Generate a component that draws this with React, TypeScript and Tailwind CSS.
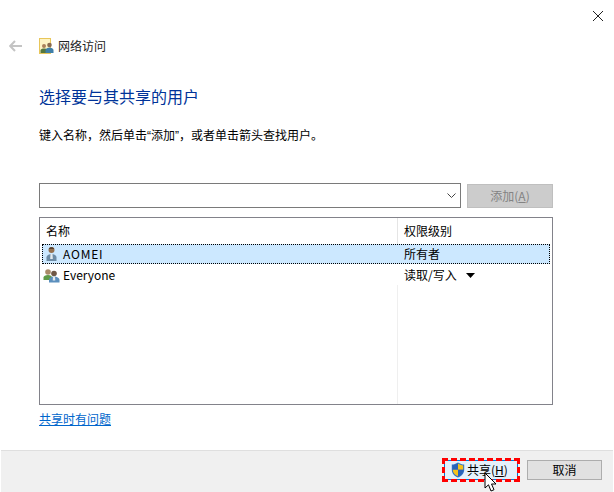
const font = "[font-family:'Noto_Sans_CJK_SC','Liberation_Sans',sans-serif]"
const latin = "[font-family:'Liberation_Sans',sans-serif]"

function NetworkIcon() {
  return (
    <svg width="15" height="16" viewBox="0 0 15 16">
      <rect x="0.5" y="0.5" width="11" height="15" fill="#fdf3c4" stroke="#e8c65a" />
      <circle cx="5" cy="8" r="2" fill="#a9805a" />
      <path d="M1.500 15v-2.500c0-1.500 2-2 3.500-2s3.500.5 3.500 2V15z" fill="#55773f" />
      <circle cx="10.500" cy="7" r="2.300" fill="#8a6a50" />
      <path d="M6.500 15v-3c0-1.500 2.500-2.500 4-2.500s4 1 4 2.500v3z" fill="#3f7fa8" />
    </svg>
  )
}

function UserIcon() {
  return (
    <svg width="13" height="16" viewBox="0 0 13 16">
      <circle cx="6.500" cy="4" r="3" fill="#94704f" />
      <path d="M3.800 3c.6-2.400 4.800-2.400 5.400 0z" fill="#54402f" />
      <path d="M1.500 15v-3.500c0-2 2.500-3.500 5-3.500s5 1.500 5 3.500V15z" fill="#6d8ca6" />
      <path d="M5.500 8h2l.3 5h-2.600z" fill="#e3eaef" />
    </svg>
  )
}

function GroupIcon() {
  return (
    <svg width="17" height="15" viewBox="0 0 17 15">
      <circle cx="5" cy="4" r="2.800" fill="#a98a68" />
      <path d="M0.500 12V9.500C.5 8 2.500 7 5 7s4 1 4 2.500V12z" fill="#5f9a48" />
      <circle cx="11" cy="5.500" r="2.800" fill="#6f5846" />
      <path d="M6 14.500V12c0-2 2.500-3.500 5-3.500s5.500 1.500 5.500 3.500v2.500z" fill="#5b8fbd" />
      <path d="M10 8.500h2l.3 4h-2.600z" fill="#e3eaef" />
    </svg>
  )
}

function Shield() {
  return (
    <svg width="14" height="16" viewBox="0 0 14 16">
      <path d="M7 .5C5 1.800 3 2.500.8 2.600v5.200C.8 11.500 3.500 14.200 7 15.500c3.500-1.300 6.200-4 6.200-7.700V2.600C11 2.500 9 1.800 7 .5z" fill="#2f6fc4" />
      <path d="M7 1.500v6.300H1.800V3.500C3.500 3.300 5.500 2.600 7 1.500z" fill="#2a63b8" />
      <path d="M7 1.500c1.500 1.100 3.500 1.800 5.200 2v4.300H7z" fill="#f6c21c" />
      <path d="M1.800 7.800H7v6.500C4 13.200 1.800 11 1.800 7.800z" fill="#f6c21c" />
      <path d="M7 7.800h5.200c0 3.200-2.200 5.400-5.200 6.500z" fill="#2a63b8" />
    </svg>
  )
}

function Cursor() {
  return (
    <svg width="15" height="21" viewBox="0 0 15 21">
      <path d="M1 1v15l3.500-3.200L7 19l3-1.300-2.500-5.700H12z" fill="#fff" stroke="#000" strokeWidth="1" />
    </svg>
  )
}

export default function App() {
  return (
    <div className={`w-[614px] h-[492px] bg-white flex flex-col text-[12px] text-black overflow-hidden ${font}`}>
      {/* title bar */}
      <div className="h-[30px] flex justify-end items-center pr-[10px]">
        <svg width="12" height="12" viewBox="0 0 12 12" className="mt-[1px]">
          <path d="M1 1l10 10M11 1L1 11" stroke="#222" strokeWidth="1" fill="none" />
        </svg>
      </div>

      <div className="h-[32px] flex items-center pl-[9px]">
        <svg width="13" height="12" viewBox="0 0 13 12" className="mr-[17px]">
          <path d="M6 1L1.200 6 6 11M1.500 6H13" stroke="#c4c4c4" strokeWidth="2" fill="none" />
        </svg>
        <NetworkIcon />
        <span className="ml-[4px] text-[#222]">网络访问</span>
      </div>

      <div className="pl-[39px] pr-[61px] flex-1 flex flex-col">
        <h1 className="mt-[21px] h-[26px] leading-[26px] text-[16px] text-[#003399] font-normal">选择要与其共享的用户</h1>
        <p className="mt-[16px] h-[20px] leading-[20px]">
          键入名称，然后单击<span className={latin}>“</span>添加<span className={latin}>”</span>，或者单击箭头查找用户。
        </p>

        <div className="mt-[38px] flex gap-[6px] h-[25px]">
          <div className="flex-1 border border-[#7a7a7a] flex items-center justify-end pr-[4px]">
            <svg width="9" height="6" viewBox="0 0 9 6">
              <path d="M.5.500l4 4 4-4" stroke="#444" fill="none" />
            </svg>
          </div>
          <button className="w-[86px] h-[24px] mt-[1px] bg-[#cccccc] border border-[#bfbfbf] text-[#838383]">
            添加(<span className="underline">A</span>)
          </button>
        </div>

        {/* user list */}
        <div className="mt-[9px] h-[188px] border border-[#82828a] flex flex-col relative">
          <div className="grid grid-cols-[357px_1fr] h-[26px] items-center">
            <span className="pl-[6px]">名称</span>
            <span className="pl-[6px] h-full flex items-center border-l border-[#e5e5e5]">权限级别</span>
          </div>
          <div className="mx-[2px] h-[20px] bg-[#cce8ff] outline-1 outline-dotted outline-black -outline-offset-1 grid grid-cols-[355px_1fr] items-center">
            <span className="flex items-center pl-[3px] gap-[5px] tracking-[0.8px]"><UserIcon />AOMEI</span>
            <span className="pl-[7px]">所有者</span>
          </div>
          <div className="mx-[2px] mt-[1px] h-[20px] grid grid-cols-[355px_1fr] items-center">
            <span className="flex items-center pl-[1px]"><GroupIcon /><span className="ml-[3px]">Everyone</span></span>
            <span className="pl-[7px] flex items-center">
              读取/写入
              <svg width="9" height="5" viewBox="0 0 9 5" className="ml-[9px]"><path d="M0 0h9L4.500 5z" fill="#000" /></svg>
            </span>
          </div>
          <div className="flex-1 grid grid-cols-[357px_1fr]">
            <span />
            <span className="border-l border-[#efefef]" />
          </div>
        </div>

        <a className="mt-[5px] h-[18px] leading-[18px] text-[#0066cc] underline w-fit">共享时有问题</a>
      </div>

      {/* footer */}
      <div className="ml-[1px] mr-[1px] h-[42px] bg-[#f0f0f0] border-t border-[#dfdfdf] flex justify-end items-start pt-[9px] pr-[11px] gap-[9px]">
        <div className="relative w-[74px] h-[20px]">
          <button className="w-full h-full bg-[#e5f1fb] border border-[#0078d7] flex items-center pl-[6px]">
            <Shield />
            <span className="ml-[2px]">共享(<span className="underline">H</span>)</span>
          </button>
          <div className="absolute -inset-[2px] border-[3px] border-dashed border-[#ff0000]" />
          <div className="absolute left-[40px] top-[12px]"><Cursor /></div>
        </div>
        <button className="w-[75px] h-[20px] bg-[#e1e1e1] border border-[#adadad] flex items-center justify-center">取消</button>
      </div>
    </div>
  )
}
